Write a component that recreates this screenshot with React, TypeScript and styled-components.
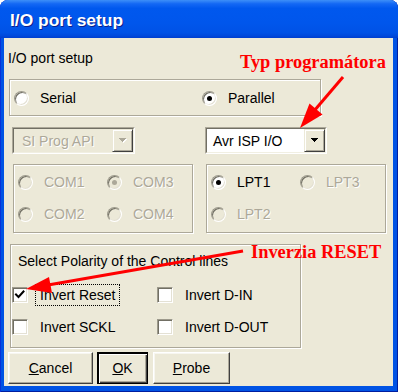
import React from 'react';
import styled, { createGlobalStyle } from 'styled-components';

const Global = createGlobalStyle`
  html, body { margin: 0; padding: 0; background: #fff; }
  body { font-family: "Liberation Sans", Arial, sans-serif; font-size: 14px; color: #000; }
  * { box-sizing: border-box; }
`;

const Window = styled.div`
  position: relative;
  width: 398px;
  height: 392px;
  display: flex;
  flex-direction: column;
  background: #0053e4;
  border-radius: 8px 8px 0 0;
  overflow: hidden;
  box-shadow: inset 1px 0 0 #0831d9, inset -1px 0 0 #001ea0, inset 0 -1px 0 #001ea0;
`;

const TitleBar = styled.div`
  height: 38px;
  flex: none;
  padding: 10px 0 0 10px;
  background: linear-gradient(180deg, #3d8ff8 0%, #1468f4 10%, #0058ee 22%, #0056ec 60%, #0052e6 86%, #0049dc 94%, #003fcf 100%);
`;

const Title = styled.div`
  font-family: "Liberation Sans", Arial, sans-serif;
  font-weight: bold;
  font-size: 17.4px;
  line-height: 20px;
  color: #fff;
  text-shadow: 1px 1px 0 #0a1f8c;
`;

const Client = styled.div`
  flex: 1;
  margin: 0 5px 6px 4px;
  background: #ece9d8;
  display: flex;
  flex-direction: column;
  align-items: flex-start;
`;

const Caption = styled.div`
  margin: 12px 0 0 4px;
  line-height: 16px;
`;

const Etched = styled.div`
  border: 1px solid #aca899;
  box-shadow: 1px 1px 0 #fff, inset 1px 1px 0 #fff;
`;

const ModeGroup = styled(Etched)`
  margin: 13px 0 0 5px;
  width: 312px;
  height: 37px;
  display: grid;
  grid-template-columns: 188px 1fr;
  align-items: center;
  padding: 1px 0 0 4px;
`;

const RadioItem = styled.div`
  display: flex;
  align-items: center;
`;

const Radio = styled.span<{ $checked?: boolean; $disabled?: boolean }>`
  position: relative;
  flex: none;
  width: 15px;
  height: 15px;
  border-radius: 50%;
  border: 1px solid;
  border-color: #9d9a8c #fff #fff #9d9a8c;
  background: ${p => (p.$disabled ? '#ece9d8' : '#fff')};
  box-shadow: inset 1px 1px 0 #716f64, inset -1px -1px 0 #e4e1d4;
  &::after {
    content: '';
    display: ${p => (p.$checked ? 'block' : 'none')};
    position: absolute;
    left: 4px;
    top: 4px;
    width: 5px;
    height: 5px;
    border-radius: 50%;
    background: ${p => (p.$disabled ? '#aca899' : '#000')};
  }
`;

const ItemText = styled.span<{ $disabled?: boolean }>`
  margin-left: 11px;
  line-height: 16px;
  white-space: nowrap;
  color: ${p => (p.$disabled ? '#aca899' : '#000')};
  text-shadow: ${p => (p.$disabled ? '1px 1px 0 #fff' : 'none')};
`;

const ComboRow = styled.div`
  margin: 11px 0 0 8px;
  display: flex;
  gap: 70px;
`;

const ComboOuter = styled.div<{ $w: number }>`
  width: ${p => p.$w}px;
  height: 27px;
  border: 1px solid;
  border-color: #aca899 #fff #fff #aca899;
  display: flex;
`;

const ComboInner = styled.div<{ $disabled?: boolean }>`
  flex: 1;
  display: flex;
  border: 1px solid;
  border-color: #716f64 #f1efe2 #f1efe2 #716f64;
  background: ${p => (p.$disabled ? '#ece9d8' : '#fff')};
`;

const ComboText = styled.span<{ $disabled?: boolean }>`
  flex: 1;
  display: flex;
  align-items: center;
  padding-left: ${p => (p.$disabled ? 8 : 6)}px;
  white-space: nowrap;
  color: ${p => (p.$disabled ? '#aca899' : '#000')};
  text-shadow: ${p => (p.$disabled ? '1px 1px 0 #fff' : 'none')};
`;

const DropButton = styled.span`
  width: 21px;
  flex: none;
  display: flex;
  align-items: center;
  justify-content: center;
  background: #ece9d8;
  border: 1px solid;
  border-color: #ece9d8 #404040 #404040 #ece9d8;
  box-shadow: inset 1px 1px 0 #fff, inset -1px -1px 0 #aca899;
`;

const PortRow = styled.div`
  margin: 10px 0 0 9px;
  display: flex;
  gap: 13px;
`;

const PortGroup = styled(Etched)`
  width: 180px;
  height: 69px;
  display: grid;
  grid-template-columns: 89px 1fr;
  grid-auto-rows: 32px;
  align-items: center;
  padding: 1px 0 0 4px;
`;

const PolarityBox = styled(Etched)`
  margin: 11px 0 0 6px;
  width: 291px;
  height: 104px;
  padding: 8px 0 0 1px;
`;

const PolarityLabel = styled.div`
  margin-left: 6px;
  line-height: 16px;
`;

const CheckGrid = styled.div`
  margin-top: 10px;
  display: grid;
  grid-template-columns: 145px 1fr;
  grid-auto-rows: 32px;
  align-items: center;
`;

const CheckItem = styled.div`
  display: flex;
  align-items: center;
`;

const CheckBox = styled.span`
  flex: none;
  width: 16px;
  height: 16px;
  border: 1px solid;
  border-color: #9d9a8c #fff #fff #9d9a8c;
  box-shadow: inset 1px 1px 0 #716f64, inset -1px -1px 0 #e4e1d4;
  background: #fff;
  display: flex;
`;

const CheckText = styled.span<{ $focus?: boolean }>`
  margin-left: 7px;
  padding: 2px 4px;
  line-height: 16px;
  white-space: nowrap;
  border: 1px ${p => (p.$focus ? 'dotted #000' : 'solid transparent')};
`;

const ButtonRow = styled.div`
  margin: 4px 0 0 4px;
  display: flex;
`;

const Button = styled.button<{ $w: number; $gap: number; $default?: boolean }>`
  width: ${p => p.$w}px;
  height: 32px;
  margin-left: ${p => p.$gap}px;
  padding: 0;
  font: inherit;
  font-size: 14px;
  color: #000;
  background: #ece9d8;
  border: 1px solid;
  border-color: ${p => (p.$default ? '#000' : '#fff #404040 #404040 #fff')};
  box-shadow: ${p =>
    p.$default
      ? 'inset 1px 1px 0 #000, inset 2px 2px 0 #fff, inset -1px -1px 0 #404040, inset -2px -2px 0 #aca899'
      : 'inset -1px -1px 0 #aca899, inset 1px 1px 0 #f7f6f0'};
`;

const Overlay = styled.svg`
  position: absolute;
  left: 0;
  top: 0;
  pointer-events: none;
`;

const Note = styled.div<{ $x: number; $y: number }>`
  position: absolute;
  left: ${p => p.$x}px;
  top: ${p => p.$y}px;
  font-family: "Liberation Serif", "Times New Roman", serif;
  font-weight: bold;
  font-size: 18.4px;
  line-height: 20px;
  color: #ff0000;
  white-space: nowrap;
`;

const ArrowDown = ({ disabled }: { disabled?: boolean }) => (
  <svg width="8" height="5" viewBox="0 0 8 5">
    {disabled && (
      <g fill="#fff">
        <rect x="1" y="1" width="7" height="1" />
        <rect x="2" y="2" width="5" height="1" />
        <rect x="3" y="3" width="3" height="1" />
        <rect x="4" y="4" width="1" height="1" />
      </g>
    )}
    <g fill={disabled ? '#aca899' : '#000'}>
      <rect x="0" y="0" width="7" height="1" />
      <rect x="1" y="1" width="5" height="1" />
      <rect x="2" y="2" width="3" height="1" />
      <rect x="3" y="3" width="1" height="1" />
    </g>
  </svg>
);

const Check = () => (
  <svg width="14" height="14" viewBox="0 0 14 14">
    <path d="M3 6.5 L5.5 9 L10.5 3.5" fill="none" stroke="#000" strokeWidth="2" strokeLinecap="square" />
  </svg>
);

export default function App() {
  return (
    <>
      <Global />
      <Window>
        <TitleBar>
          <Title>I/O port setup</Title>
        </TitleBar>
        <Client>
          <Caption>I/O port setup</Caption>
          <ModeGroup>
            <RadioItem>
              <Radio />
              <ItemText>Serial</ItemText>
            </RadioItem>
            <RadioItem>
              <Radio $checked />
              <ItemText>Parallel</ItemText>
            </RadioItem>
          </ModeGroup>
          <ComboRow>
            <ComboOuter $w={123}>
              <ComboInner $disabled>
                <ComboText $disabled>SI Prog API</ComboText>
                <DropButton>
                  <ArrowDown disabled />
                </DropButton>
              </ComboInner>
            </ComboOuter>
            <ComboOuter $w={122}>
              <ComboInner>
                <ComboText>Avr ISP I/O</ComboText>
                <DropButton>
                  <ArrowDown />
                </DropButton>
              </ComboInner>
            </ComboOuter>
          </ComboRow>
          <PortRow>
            <PortGroup>
              <RadioItem>
                <Radio $disabled />
                <ItemText $disabled>COM1</ItemText>
              </RadioItem>
              <RadioItem>
                <Radio $disabled $checked />
                <ItemText $disabled>COM3</ItemText>
              </RadioItem>
              <RadioItem>
                <Radio $disabled />
                <ItemText $disabled>COM2</ItemText>
              </RadioItem>
              <RadioItem>
                <Radio $disabled />
                <ItemText $disabled>COM4</ItemText>
              </RadioItem>
            </PortGroup>
            <PortGroup>
              <RadioItem>
                <Radio $checked />
                <ItemText>LPT1</ItemText>
              </RadioItem>
              <RadioItem>
                <Radio $disabled />
                <ItemText $disabled>LPT3</ItemText>
              </RadioItem>
              <RadioItem>
                <Radio $disabled />
                <ItemText $disabled>LPT2</ItemText>
              </RadioItem>
            </PortGroup>
          </PortRow>
          <PolarityBox>
            <PolarityLabel>Select Polarity of the Control lines</PolarityLabel>
            <CheckGrid>
              <CheckItem>
                <CheckBox>
                  <Check />
                </CheckBox>
                <CheckText $focus>Invert Reset</CheckText>
              </CheckItem>
              <CheckItem>
                <CheckBox />
                <CheckText>Invert D-IN</CheckText>
              </CheckItem>
              <CheckItem>
                <CheckBox />
                <CheckText>Invert SCKL</CheckText>
              </CheckItem>
              <CheckItem>
                <CheckBox />
                <CheckText>Invert D-OUT</CheckText>
              </CheckItem>
            </CheckGrid>
          </PolarityBox>
          <ButtonRow>
            <Button $w={85} $gap={0}>
              <u>C</u>ancel
            </Button>
            <Button $w={51} $gap={4} $default>
              <u>O</u>K
            </Button>
            <Button $w={77} $gap={5}>
              <u>P</u>robe
            </Button>
          </ButtonRow>
        </Client>
        <Overlay width="398" height="392" viewBox="0 0 398 392">
          <g stroke="#ff0000" strokeWidth="3" fill="none">
            <line x1="343" y1="77" x2="314" y2="111" />
            <line x1="243" y1="251" x2="48" y2="285" />
          </g>
          <g fill="#ff0000">
            <polygon points="300,128 322.5,114.5 309.5,103.5" />
            <polygon points="26,289 52,293 49,277" />
          </g>
        </Overlay>
        <Note $x={240} $y={52}>Typ programátora</Note>
        <Note $x={251} $y={242}>Inverzia RESET</Note>
      </Window>
    </>
  );
}
